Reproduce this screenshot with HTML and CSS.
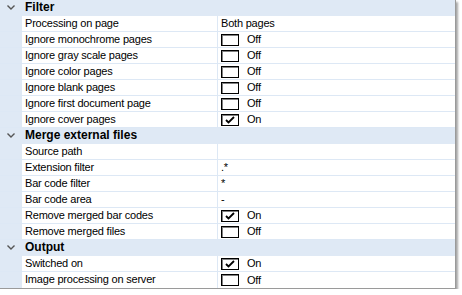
FILE: index.html
```html
<!DOCTYPE html>
<html lang="en">
<head>
    <meta charset="UTF-8">
    <title>Settings</title>
    <link rel="stylesheet" href="styles.css">
</head>
<body>
    <div class="panel">
        <div class="row group"><span class="gutter"><svg class="chev" viewBox="0 0 8 5" width="8" height="5"><path d="M0.5 0.5 L4 4 L7.5 0.5" fill="none" stroke="#555" stroke-width="1.4"/></svg></span><span class="title">Filter</span></div>
        <div class="row"><span class="gutter"></span><span class="label">Processing on page</span><span class="value">Both pages</span></div>
        <div class="row"><span class="gutter"></span><span class="label">Ignore monochrome pages</span><span class="value"><span class="box"></span>Off</span></div>
        <div class="row"><span class="gutter"></span><span class="label">Ignore gray scale pages</span><span class="value"><span class="box"></span>Off</span></div>
        <div class="row"><span class="gutter"></span><span class="label">Ignore color pages</span><span class="value"><span class="box"></span>Off</span></div>
        <div class="row"><span class="gutter"></span><span class="label">Ignore blank pages</span><span class="value"><span class="box"></span>Off</span></div>
        <div class="row"><span class="gutter"></span><span class="label">Ignore first document page</span><span class="value"><span class="box"></span>Off</span></div>
        <div class="row"><span class="gutter"></span><span class="label">Ignore cover pages</span><span class="value"><span class="box"><svg viewBox="0 0 10 8" width="10" height="8"><path d="M1 4 L3.5 6.5 L9 1" fill="none" stroke="#000" stroke-width="1.8"/></svg></span>On</span></div>

        <div class="row group"><span class="gutter"><svg class="chev" viewBox="0 0 8 5" width="8" height="5"><path d="M0.5 0.5 L4 4 L7.5 0.5" fill="none" stroke="#555" stroke-width="1.4"/></svg></span><span class="title">Merge external files</span></div>
        <div class="row"><span class="gutter"></span><span class="label">Source path</span><span class="value"></span></div>
        <div class="row"><span class="gutter"></span><span class="label">Extension filter</span><span class="value">.*</span></div>
        <div class="row"><span class="gutter"></span><span class="label">Bar code filter</span><span class="value">*</span></div>
        <div class="row"><span class="gutter"></span><span class="label">Bar code area</span><span class="value">-</span></div>
        <div class="row"><span class="gutter"></span><span class="label">Remove merged bar codes</span><span class="value"><span class="box"><svg viewBox="0 0 10 8" width="10" height="8"><path d="M1 4 L3.5 6.5 L9 1" fill="none" stroke="#000" stroke-width="1.8"/></svg></span>On</span></div>
        <div class="row"><span class="gutter"></span><span class="label">Remove merged files</span><span class="value"><span class="box"></span>Off</span></div>

        <div class="row group"><span class="gutter"><svg class="chev" viewBox="0 0 8 5" width="8" height="5"><path d="M0.5 0.5 L4 4 L7.5 0.5" fill="none" stroke="#555" stroke-width="1.4"/></svg></span><span class="title">Output</span></div>
        <div class="row"><span class="gutter"></span><span class="label">Switched on</span><span class="value"><span class="box"><svg viewBox="0 0 10 8" width="10" height="8"><path d="M1 4 L3.5 6.5 L9 1" fill="none" stroke="#000" stroke-width="1.8"/></svg></span>On</span></div>
        <div class="row last"><span class="gutter"></span><span class="label">Image processing on server</span><span class="value"><span class="box"></span>Off</span></div>
    </div>
</body>
</html>
```

FILE: styles.css
```css
body {
    margin: 0;
    background-color: white;
    font-family: "Liberation Sans", Arial, sans-serif;
    font-size: 11px;
    letter-spacing: -0.2px;
    color: #000;
}
.panel {
    width: 455px;
    background-color: white;
    border-right: 1px solid #9a9a9a;
    border-bottom: 1px solid #9a9a9a;
    box-shadow: 2px 2px 2px rgba(0, 0, 0, 0.35);
}
.row {
    display: grid;
    grid-template-columns: 22px 196px 1fr;
    height: 15px;
    border-bottom: 1px solid #dde8f5;
    line-height: 15px;
    white-space: nowrap;
}
.row.last {
    border-bottom: none;
    height: 16px;
}
.gutter {
    background-color: #dfe9f5;
    display: flex;
    justify-content: center;
    align-items: center;
    padding-right: 1px;
}
.row.group {
    background-color: #dfe9f5;
    border-bottom-color: #dfe9f5;
}
.title {
    font-weight: bold;
    padding-left: 3px;
    font-size: 12px;
    letter-spacing: 0;
}
.label {
    padding-left: 3px;
    border-right: 1px solid #dde8f5;
}
.value {
    display: flex;
    align-items: center;
    padding-left: 3px;
}
.box {
    width: 16px;
    height: 10px;
    border: 1px solid #000;
    box-shadow: inset 1px 1px 0 #808080;
    margin-right: 8px;
    display: flex;
    justify-content: center;
    align-items: center;
    background-color: white;
}
```
